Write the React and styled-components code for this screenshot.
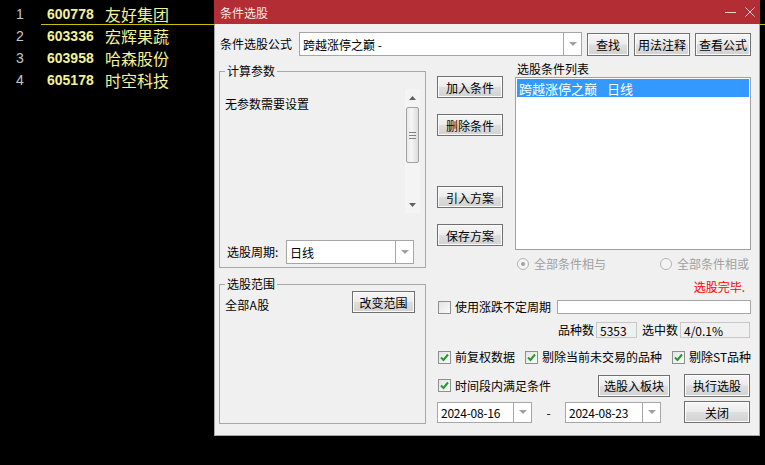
import React from 'react';
import styled, { createGlobalStyle } from 'styled-components';

const GlobalStyle = createGlobalStyle`
  * { box-sizing: border-box; }
  html, body { margin: 0; padding: 0; background: #000; }
  body {
    width: 765px;
    height: 465px;
    overflow: hidden;
    font-family: "Noto Sans CJK SC", "Liberation Sans", sans-serif;
  }
`;

const Screen = styled.div`
  position: relative;
  width: 765px;
  height: 465px;
  background: #000;
  overflow: hidden;
`;

const StockList = styled.div`
  padding-top: 3px;
`;

const StockRow = styled.div`
  display: flex;
  height: 22px;
`;

const RowIndex = styled.div`
  width: 41px;
  padding-left: 16px;
  font-family: "Liberation Sans", sans-serif;
  font-size: 14px;
  line-height: 22px;
  color: #c8c8c8;
`;

const RowBody = styled.div`
  flex: 1;
  display: flex;
  align-items: center;
  border-bottom: 1px solid ${(p) => (p.$active ? '#c8c000' : 'transparent')};
`;

const Code = styled.span`
  width: 58px;
  margin-left: 6px;
  font-family: "Liberation Sans", sans-serif;
  font-weight: bold;
  font-size: 14px;
  color: #f2f29a;
`;

const Name = styled.span`
  font-family: "Noto Sans CJK SC", sans-serif;
  font-size: 16px;
  color: #f2f29a;
`;

/* dialog window */

const Window = styled.div`
  position: absolute;
  left: 214px;
  top: 0;
  width: 546px;
  height: 436px;
  background: #f0f0f0;
  border: 1px solid #a6a6a6;
  border-top: none;
  display: flex;
  flex-direction: column;
  font-size: 12px;
  color: #000;
`;

const TitleBar = styled.div`
  height: 24px;
  margin: 0 -1px;
  padding-left: 6px;
  background: #b22e34;
  color: #fbeaea;
  display: flex;
  align-items: center;
  justify-content: space-between;
  font-size: 12px;
`;

const Caption = styled.div`
  display: flex;
  align-items: center;
  gap: 9px;
  padding-right: 5px;
`;

const Body = styled.div`
  flex: 1;
  padding: 8px 7px 0 4px;
`;

const FormulaRow = styled.div`
  display: flex;
  align-items: center;
  height: 24px;
`;

const FieldLabel = styled.span`
  width: ${(p) => p.$w || 'auto'};
  padding-left: ${(p) => p.$pl || 0}px;
  margin-left: ${(p) => p.$ml || 0}px;
  white-space: nowrap;
  line-height: 14px;
`;

const Button = styled.button`
  width: ${(p) => p.$w}px;
  height: ${(p) => p.$h || 22}px;
  margin-left: ${(p) => p.$ml || 0}px;
  margin-top: ${(p) => p.$mt || 0}px;
  margin-right: ${(p) => p.$mr || 0}px;
  padding: 0;
  font-family: "Noto Sans CJK SC", sans-serif;
  font-size: 12px;
  color: #000;
  border: 1px solid #707070;
  border-radius: 0;
  background: linear-gradient(#f6f6f6 0%, #ececec 48%, #dedede 52%, #d2d2d2 100%);
  box-shadow: inset 0 0 0 1px #fcfcfc;
  flex-shrink: 0;
`;

const Combo = styled.div`
  width: ${(p) => p.$w}px;
  height: ${(p) => p.$h || 24}px;
  display: flex;
  background: #fff;
  border: 1px solid #a6a6a6;
  flex-shrink: 0;
`;

const ComboText = styled.div`
  flex: 1;
  display: flex;
  align-items: center;
  padding-left: 3px;
  font-size: 12px;
  letter-spacing: ${(p) => (p.$date ? '-0.25px' : 'normal')};
  white-space: pre;
`;

const ComboArrow = styled.div`
  width: 18px;
  border-left: 1px solid #a6a6a6;
  display: flex;
  align-items: center;
  justify-content: center;
`;

const Main = styled.div`
  display: grid;
  grid-template-columns: 207px 314px;
  column-gap: 11px;
  margin-top: 6px;
`;

const LeftCol = styled.div`
  display: flex;
  flex-direction: column;
`;

const Group = styled.fieldset`
  margin: ${(p) => p.$mt}px 0 0 0;
  height: ${(p) => p.$h}px;
  padding: ${(p) => p.$pt}px 5px 3px 5px;
  border: 1px solid #a8a8a8;
  min-width: 0;
`;

const Legend = styled.legend`
  padding: 0 2px;
  font-size: 12px;
  line-height: 14px;
`;

const ParamArea = styled.div`
  height: 124px;
  display: flex;
`;

const ParamText = styled.div`
  flex: 1;
  padding-top: 8px;
  line-height: 14px;
`;

const ScrollBar = styled.div`
  width: 15px;
  display: flex;
  flex-direction: column;
  align-items: center;
  background: #f4f4f4;
`;

const ScrollArrow = styled.div`
  height: 17px;
  display: flex;
  align-items: center;
  justify-content: center;
`;

const ScrollTrack = styled.div`
  flex: 1;
  width: 100%;
  padding: 1px 1px 0;
`;

const Thumb = styled.div`
  height: 56px;
  border: 1px solid #a2a2a2;
  border-radius: 2px;
  background: linear-gradient(90deg, #e8e8e8, #f6f6f6 40%, #dcdcdc);
  display: flex;
  flex-direction: column;
  align-items: center;
  justify-content: center;
  gap: 2px;
`;

const Grip = styled.span`
  width: 7px;
  height: 1px;
  background: #808080;
`;

const PeriodRow = styled.div`
  display: flex;
  align-items: center;
  justify-content: space-between;
  margin-top: 27px;
  padding-left: 2px;
  padding-right: 6px;
`;

const RangeRow = styled.div`
  display: flex;
  justify-content: space-between;
  align-items: flex-start;
  padding-right: 5px;
`;

const RangeText = styled.span`
  margin-top: 7px;
  line-height: 14px;
  letter-spacing: 0.3px;
`;

const RightCol = styled.div`
  display: flex;
  flex-direction: column;
`;

const TopSection = styled.div`
  display: flex;
  gap: 12px;
  height: 209px;
`;

const ButtonCol = styled.div`
  width: 66px;
  display: flex;
  flex-direction: column;
  padding-top: 14px;
`;

const ListCol = styled.div`
  width: 236px;
  display: flex;
  flex-direction: column;
`;

const ListBox = styled.div`
  margin-top: 1px;
  height: 174px;
  background: #fff;
  border: 1px solid #a0a0a0;
  padding: 1px;
`;

const ListItem = styled.div`
  height: 18px;
  padding-left: 2px;
  display: flex;
  align-items: center;
  gap: 10px;
  font-size: 13px;
  background: ${(p) => (p.$selected ? '#3399ff' : 'transparent')};
  color: ${(p) => (p.$selected ? '#fff' : '#000')};
  white-space: nowrap;
`;

const RadioRow = styled.div`
  display: flex;
  margin-top: 7px;
  padding-left: 2px;
  height: 14px;
`;

const RadioItem = styled.div`
  width: ${(p) => p.$w || 'auto'};
  display: flex;
  align-items: center;
  gap: 5px;
  color: #a0a0a0;
  line-height: 14px;
`;

const Radio = styled.span`
  width: 12px;
  height: 12px;
  border-radius: 50%;
  border: 1px solid #b4b4b4;
  background: #f4f4f4;
  display: flex;
  align-items: center;
  justify-content: center;

  &::after {
    content: '';
    width: 4px;
    height: 4px;
    border-radius: 50%;
    background: ${(p) => (p.$checked ? '#a0a0a0' : 'transparent')};
  }
`;

const StatusLine = styled.div`
  margin-top: 9px;
  padding-right: 6px;
  text-align: right;
  color: #ff0000;
  line-height: 14px;
`;

const OptionRow = styled.div`
  display: flex;
  align-items: center;
  margin-top: ${(p) => p.$mt}px;
  height: ${(p) => p.$h || 14}px;
`;

const CheckItem = styled.label`
  width: ${(p) => p.$w || 'auto'};
  flex: ${(p) => (p.$grow ? 1 : 'none')};
  display: flex;
  align-items: center;
  gap: 4px;
  padding-left: 1px;
  line-height: 14px;
  white-space: nowrap;
`;

const Box = styled.span`
  width: 13px;
  height: 13px;
  border: 1px solid #8e8f8f;
  background: linear-gradient(135deg, #e4e4e4, #fafafa);
  display: flex;
  align-items: center;
  justify-content: center;
  flex-shrink: 0;
`;

const EditBox = styled.div`
  width: ${(p) => p.$w}px;
  height: ${(p) => p.$h || 14}px;
  margin-left: ${(p) => p.$ml || 0}px;
  background: ${(p) => (p.$readonly ? '#f0f0f0' : '#fff')};
  border: 1px solid ${(p) => (p.$readonly ? '#c8c8c8' : '#a6a6a6')};
  padding-left: 3px;
  display: flex;
  align-items: center;
  flex-shrink: 0;
`;

const StatsRow = styled.div`
  display: flex;
  align-items: center;
  justify-content: flex-end;
  margin-top: 8px;
  height: 16px;
  padding-right: 1px;
`;

const Dash = styled.span`
  width: 33px;
  text-align: center;
`;

const Spacer = styled.div`
  flex: 1;
`;

const Arrow = ({ color = '#a0a0a0' }) => (
  <svg width="8" height="4" viewBox="0 0 8 4">
    <path d="M0 0H8L4 4Z" fill={color} />
  </svg>
);

const Check = ({ checked }) => (
  <Box>
    {checked && (
      <svg width="11" height="11" viewBox="0 0 11 11">
        <path d="M2 5.5L4.5 8L9 2.5" stroke="#1f9e2a" strokeWidth="2" fill="none" />
      </svg>
    )}
  </Box>
);

const stocks = [
  { idx: 1, code: '600778', name: '友好集团' },
  { idx: 2, code: '603336', name: '宏辉果蔬' },
  { idx: 3, code: '603958', name: '哈森股份' },
  { idx: 4, code: '605178', name: '时空科技' },
];

const App = () => {
  return (
    <Screen>
      <GlobalStyle />
      <StockList>
        {stocks.map((s) => (
          <StockRow key={s.code}>
            <RowIndex>{s.idx}</RowIndex>
            <RowBody $active={s.idx === 1}>
              <Code>{s.code}</Code>
              <Name>{s.name}</Name>
            </RowBody>
          </StockRow>
        ))}
      </StockList>

      <Window>
        <TitleBar>
          <span>条件选股</span>
          <Caption>
            <svg width="11" height="10" viewBox="0 0 11 10">
              <path d="M0 5.5H11" stroke="#f1d0d0" strokeWidth="1" />
            </svg>
            <svg width="10" height="10" viewBox="0 0 10 10">
              <path d="M0.5 0.5L9.5 9.5M9.5 0.5L0.5 9.5" stroke="#f1d0d0" strokeWidth="1" />
            </svg>
          </Caption>
        </TitleBar>

        <Body>
          <FormulaRow>
            <FieldLabel $w="80px" $pl={1}>条件选股公式</FieldLabel>
            <Combo $w={283}>
              <ComboText>跨越涨停之巅 -</ComboText>
              <ComboArrow>
                <Arrow />
              </ComboArrow>
            </Combo>
            <Button $w={42} $h={23} $ml={5}>查找</Button>
            <Button $w={56} $h={23} $ml={5}>用法注释</Button>
            <Button $w={56} $h={23} $ml={5}>查看公式</Button>
          </FormulaRow>

          <Main>
            <LeftCol>
              <Group $mt={2} $h={204} $pt={11}>
                <Legend>计算参数</Legend>
                <ParamArea>
                  <ParamText>无参数需要设置</ParamText>
                  <ScrollBar>
                    <ScrollArrow>
                      <svg width="7" height="4" viewBox="0 0 7 4">
                        <path d="M0 4H7L3.5 0Z" fill="#606060" />
                      </svg>
                    </ScrollArrow>
                    <ScrollTrack>
                      <Thumb>
                        <Grip />
                        <Grip />
                        <Grip />
                      </Thumb>
                    </ScrollTrack>
                    <ScrollArrow>
                      <svg width="7" height="4" viewBox="0 0 7 4">
                        <path d="M0 0H7L3.5 4Z" fill="#606060" />
                      </svg>
                    </ScrollArrow>
                  </ScrollBar>
                </ParamArea>
                <PeriodRow>
                  <FieldLabel>选股周期:</FieldLabel>
                  <Combo $w={128}>
                    <ComboText>日线</ComboText>
                    <ComboArrow>
                      <Arrow />
                    </ComboArrow>
                  </Combo>
                </PeriodRow>
              </Group>

              <Group $mt={9} $h={147} $pt={0}>
                <Legend>选股范围</Legend>
                <RangeRow>
                  <RangeText>全部A股</RangeText>
                  <Button $w={63}>改变范围</Button>
                </RangeRow>
              </Group>
            </LeftCol>

            <RightCol>
              <TopSection>
                <ButtonCol>
                  <Button $w={66}>加入条件</Button>
                  <Button $w={66} $mt={16}>删除条件</Button>
                  <Button $w={66} $mt={50}>引入方案</Button>
                  <Button $w={66} $mt={16}>保存方案</Button>
                </ButtonCol>
                <ListCol>
                  <FieldLabel $pl={2}>选股条件列表</FieldLabel>
                  <ListBox>
                    <ListItem $selected>
                      <span>跨越涨停之巅</span>
                      <span>日线</span>
                    </ListItem>
                  </ListBox>
                  <RadioRow>
                    <RadioItem $w="143px">
                      <Radio $checked />
                      全部条件相与
                    </RadioItem>
                    <RadioItem>
                      <Radio />
                      全部条件相或
                    </RadioItem>
                  </RadioRow>
                </ListCol>
              </TopSection>

              <StatusLine>选股完毕.</StatusLine>

              <OptionRow $mt={6}>
                <CheckItem $grow>
                  <Check />
                  使用涨跌不定周期
                </CheckItem>
                <EditBox $w={194} />
              </OptionRow>

              <StatsRow>
                <FieldLabel>品种数</FieldLabel>
                <EditBox $readonly $w={41} $h={16} $ml={2}>5353</EditBox>
                <FieldLabel $ml={5}>选中数</FieldLabel>
                <EditBox $readonly $w={70} $h={16} $ml={2}>4/0.1%</EditBox>
              </StatsRow>

              <OptionRow $mt={12}>
                <CheckItem $w="87px">
                  <Check checked />
                  前复权数据
                </CheckItem>
                <CheckItem $w="147px">
                  <Check checked />
                  剔除当前未交易的品种
                </CheckItem>
                <CheckItem>
                  <Check checked />
                  剔除ST品种
                </CheckItem>
              </OptionRow>

              <OptionRow $mt={10} $h={23}>
                <CheckItem $grow>
                  <Check checked />
                  时间段内满足条件
                </CheckItem>
                <Button $w={72} $mr={14}>选股入板块</Button>
                <Button $w={66} $h={23} $mr={1}>执行选股</Button>
              </OptionRow>

              <OptionRow $mt={4} $h={22}>
                <Combo $w={95} $h={21}>
                  <ComboText $date>2024-08-16</ComboText>
                  <ComboArrow>
                    <Arrow />
                  </ComboArrow>
                </Combo>
                <Dash>-</Dash>
                <Combo $w={96} $h={21}>
                  <ComboText $date>2024-08-23</ComboText>
                  <ComboArrow>
                    <Arrow />
                  </ComboArrow>
                </Combo>
                <Spacer />
                <Button $w={66} $mr={1}>关闭</Button>
              </OptionRow>
            </RightCol>
          </Main>
        </Body>
      </Window>
    </Screen>
  );
};

export default App;
